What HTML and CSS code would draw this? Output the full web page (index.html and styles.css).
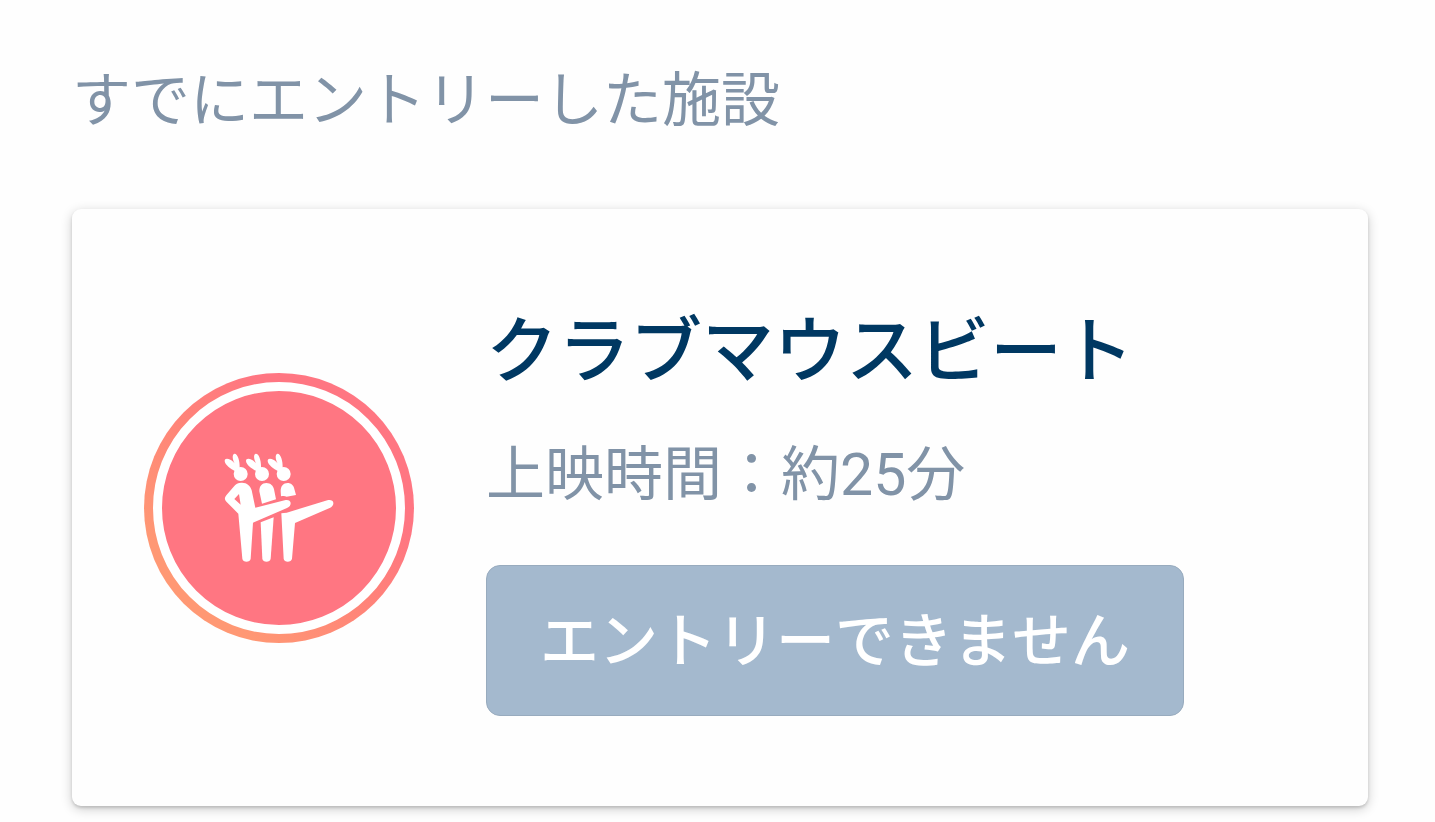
FILE: index.html
```
<!doctype html>
<html lang="ja">
  <head>
    <meta charset="UTF-8" />
    <meta name="viewport" content="width=device-width, initial-scale=1.0" />
    <title>すでにエントリーした施設</title>
    <link rel="stylesheet" href="styles.css">
  </head>
  <body>
    <main class="entries">
      <h1 class="entries-title">すでにエントリーした施設</h1>

      <article class="card">
        <div class="badge">
          <div class="badge-inner">
            <svg class="badge-icon" viewBox="-3 -6 420 420" fill="#fff" aria-hidden="true">
              <defs>
                <!-- Head with two ears -->
                <g id="head">
                  <circle cx="92" cy="102" r="21" />
                  <path d="M76 94C62 86 45 75 44 63C44 54 53 55 61 59C67 62 71 66 74 70C67 58 66 43 73 41C83 40 90 62 89 84Z" />
                </g>
              </defs>
              <use href="#head" />
              <use href="#head" x="64" />
              <use href="#head" x="129" />

              <!-- Front dancer -->
              <path fill-rule="evenodd" d="M94 128C110 127 121 137 125 151L136 203L224 181C234 178 241 182 242 189C242 196 239 201 231 204L129 248L122 356C121 368 98 368 97 356L85 221L50 186C43 179 43 173 49 166L71 140C77 132 84 128 94 128ZM87 162L73 177L92 194Z" />

              <!-- Middle dancer -->
              <path d="M148 154C148 138 156 129 169 129C182 129 190 138 192 148L198 178L156 191Z" />
              <path d="M152 247L191 232L182 356C181 368 158 368 157 356Z" />

              <!-- Back dancer -->
              <path d="M212 154C212 138 220 129 233 129C243 129 250 136 252 143L258 165L230 170C224 167 218 168 213 169Z" />
              <path d="M214 220L230 218L352 181C362 178 369 182 370 188C371 196 366 201 359 204L255 249L246 356C244 368 222 368 221 356Z" />
            </svg>
          </div>
        </div>

        <div class="card-body">
          <h2 class="card-title">クラブマウスビート</h2>
          <p class="card-time">上映時間：約25分</p>
          <button class="card-button" type="button" disabled>エントリーできません</button>
        </div>
      </article>
    </main>
  </body>
</html>
```

FILE: styles.css
```
* {
  box-sizing: border-box;
}
body {
  margin: 0;
  background: #fefefe;
  color: #8193a7;
  font-family: Roboto, "Noto Sans CJK JP", sans-serif;
  font-size: 59px;
  font-kerning: none;
  line-height: 88px;
}
.entries {
  padding: 57px 67px 16px 72px;
}
.entries-title {
  margin: 0 0 64px;
  font-size: 59px;
  font-weight: 400;
}
.card {
  display: flex;
  align-items: center;
  gap: 72px;
  padding: 90px 72px;
  background: #fefefe;
  border-radius: 9px;
  box-shadow: 0 3px 12px rgba(0, 0, 0, .2), 0 2px 3px rgba(0, 0, 0, .14);
}
.badge {
  flex: none;
  width: 270px;
  height: 270px;
  padding: 9px;
  border-radius: 50%;
  background: linear-gradient(45deg, #ff9874 20%, #ff8279 50%, #ff7682 70%);
}
.badge-inner {
  display: flex;
  align-items: center;
  justify-content: center;
  height: 100%;
  border: 9px solid #fff;
  border-radius: 50%;
  background: #ff7682;
}
.badge-icon {
  width: 140px;
  height: 140px;
}
.card-title {
  margin: 0 0 26px;
  color: #003862;
  font-size: 72px;
  font-weight: 500;
  line-height: 106px;
}
.card-time {
  margin: 0 0 46px;
}
.card-button {
  display: block;
  padding: 32px 53px 29px;
  border: 1px solid #98abbe;
  border-radius: 14px;
  background: #a4b9ce;
  color: #fff;
  font-family: inherit;
  font-size: 59px;
  font-weight: 500;
  font-kerning: none;
  line-height: 88px;
}
```
